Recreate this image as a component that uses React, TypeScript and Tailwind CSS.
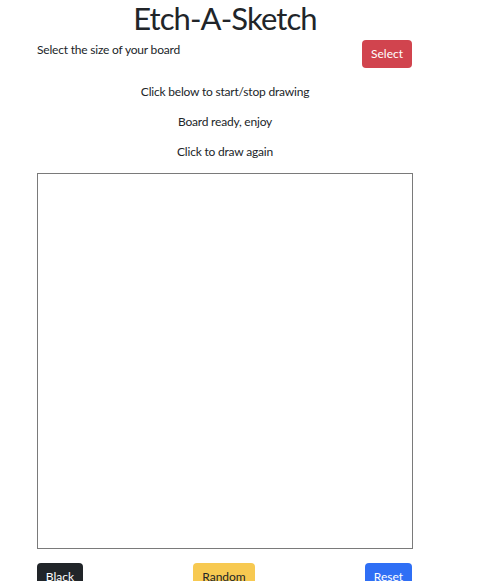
import React from 'react';

const App: React.FC = () => {
  return (
    <div className="w-[479px] h-[581px] overflow-hidden bg-white text-[#212529] font-['Lato',sans-serif]">
      <div className="w-[376px] ml-[37px] flex flex-col">
        <h1 className="text-[31px] leading-[36px] tracking-[-0.9px] text-center">Etch-A-Sketch</h1>
        <div className="flex justify-between items-start mt-[4px]">
          <p className="text-[12px] tracking-[-0.2px] leading-[18px] pt-[1px]">Select the size of your board</p>
          <button className="bg-[#d1444e] text-white text-[12px] rounded-[4px] w-[50px] h-[28px] mr-[1px]">
            Select
          </button>
        </div>
        <p className="text-[12px] tracking-[-0.2px] leading-[18px] text-center mt-[15px]">Click below to start/stop drawing</p>
        <p className="text-[12px] tracking-[-0.2px] leading-[18px] text-center mt-[12px]">Board ready, enjoy</p>
        <p className="text-[12px] tracking-[-0.2px] leading-[18px] text-center mt-[12px]">Click to draw again</p>
        <div className="mt-[12px] w-[376px] h-[376px] border border-[#7a7a7a]" />
        <div className="flex justify-between items-start mt-[14px]">
          <button className="bg-[#212529] text-white text-[12px] rounded-[4px] w-[46px] h-[30px] pt-[5px] flex justify-center">
            Black
          </button>
          <button className="bg-[#f7c951] text-[#212529] text-[12px] rounded-[4px] w-[62px] h-[30px] pt-[5px] flex justify-center">
            Random
          </button>
          <button className="bg-[#2f6ff5] text-white text-[12px] rounded-[4px] w-[47px] h-[30px] pt-[5px] flex justify-center mr-[1px]">
            Reset
          </button>
        </div>
      </div>
    </div>
  );
};

export default App;
